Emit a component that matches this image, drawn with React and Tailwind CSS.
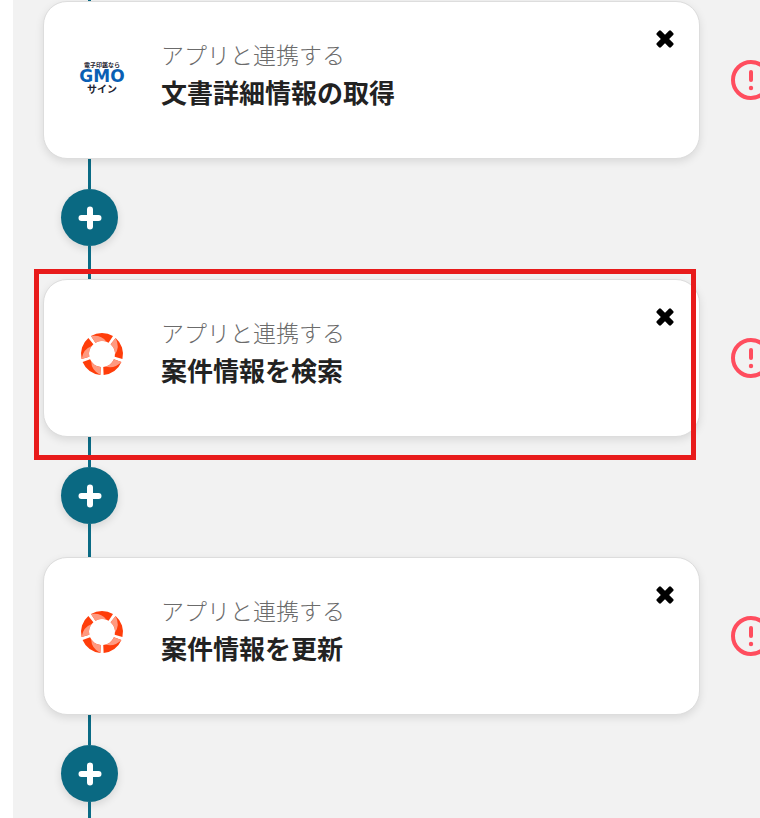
import React from 'react';

const steps = [
  { id: 1, logo: 'gmo', action: '文書詳細情報の取得' },
  { id: 2, logo: 'ring', action: '案件情報を検索', highlighted: true },
  { id: 3, logo: 'ring', action: '案件情報を更新' },
];

const GmoSignLogo = () => (
  <svg viewBox="0 0 48 40" className="h-10 w-12" role="img" aria-label="GMOサイン">
    <g textAnchor="middle" fontWeight="700">
      <text x="24" y="11" fontSize="6" fill="#1d2230" fontFamily="'Noto Sans CJK JP', sans-serif">電子印鑑なら</text>
      <text x="24" y="26" fontSize="17" fill="#0a5fb4" fontFamily="'DejaVu Sans', sans-serif">GMO</text>
      <text x="24" y="37" fontSize="10" fill="#1d2230" fontFamily="'Noto Sans CJK JP', sans-serif">サイン</text>
    </g>
  </svg>
);

const RingLogo = () => (
  <svg viewBox="-24 -24 48 48" className="size-12" aria-hidden="true">
    {[0, 72, 144, 216, 288].map((angle) => (
      <g key={angle} transform={`rotate(${angle})`}>
        <path d="M-11 -17.9A21 21 0 0 1 11 -17.9L6.6 -11.2A13 13 0 0 0 -6.6 -11.2Z" fill="#ff3d0a" />
        <path d="M-11 -17.9Q-1 -19.5 4.5 -12.2A13 13 0 0 0 -6.6 -11.2Z" fill="#ff9a80" />
      </g>
    ))}
  </svg>
);

const CloseIcon = () => (
  <svg viewBox="-9 -9 18 18" className="size-[18px]" aria-hidden="true">
    <rect x="-10" y="-2.9" width="20" height="5.8" rx="1.4" transform="rotate(45)" />
    <rect x="-10" y="-2.9" width="20" height="5.8" rx="1.4" transform="rotate(-45)" />
  </svg>
);

const ErrorIcon = () => (
  <svg viewBox="0 0 40 40" className="size-10 shrink-0" role="img" aria-label="エラー">
    <circle cx="20" cy="20" r="18" fill="none" stroke="#ff4d5e" strokeWidth="4" />
    <path d="M20 12V20" stroke="#ff4d5e" strokeWidth="4" strokeLinecap="round" />
    <circle cx="20" cy="28" r="2.2" fill="#ff4d5e" />
  </svg>
);

const StepCard = ({ step }) => (
  <div className="-mr-[11px] flex items-center gap-[31px]">
    <section className="relative flex h-[158px] flex-1 items-center rounded-3xl border border-[#dddddd] bg-white pr-[25px] pl-[34px] shadow-[0_3px_8px_rgba(0,0,0,0.10)]">
      <div className="flex w-[83px] shrink-0 pb-2">
        {step.logo === 'gmo' ? <GmoSignLogo /> : <RingLogo />}
      </div>
      <div className="flex-1 pb-3">
        <p className="text-[23px] leading-9 font-light text-[#6b6b6b]">アプリと連携する</p>
        <h2 className="text-[26px] leading-10 font-bold text-[#222222]">{step.action}</h2>
      </div>
      <button type="button" aria-label="削除" className="mt-7 self-start">
        <CloseIcon />
      </button>
      {step.highlighted && (
        <div className="pointer-events-none absolute -top-[11px] right-[3px] -bottom-6 -left-[10px] border-5 border-[#e81b1b]" />
      )}
    </section>
    <ErrorIcon />
  </div>
);

const Connector = () => (
  <div className="ml-[18px] flex h-[120px] w-[57px] flex-col items-center">
    <div className="h-[30px] w-[3px] bg-[#0a6b85]" />
    <button
      type="button"
      aria-label="ステップを追加"
      className="flex size-[57px] shrink-0 items-center justify-center rounded-full bg-[#0a6982] shadow-[0_3px_8px_rgba(0,0,0,0.12)]"
    >
      <svg viewBox="0 0 24 24" className="size-6" aria-hidden="true">
        <path d="M12 3.5V20.5M3.5 12H20.5" stroke="#fff" strokeWidth="6" strokeLinecap="round" />
      </svg>
    </button>
    <div className="w-[3px] flex-1 bg-[#0a6b85]" />
  </div>
);

const App = () => (
  <div className="min-h-screen bg-white pl-[13px] font-['Noto_Sans_CJK_JP',sans-serif]">
    <main className="max-h-screen min-h-screen overflow-hidden bg-[#f2f2f2] pl-[30px]">
      <div className="ml-[45px] h-px w-[3px] bg-[#0a6b85]" />
      {steps.map((step) => (
        <React.Fragment key={step.id}>
          <StepCard step={step} />
          <Connector />
        </React.Fragment>
      ))}
    </main>
  </div>
);

export default App;
